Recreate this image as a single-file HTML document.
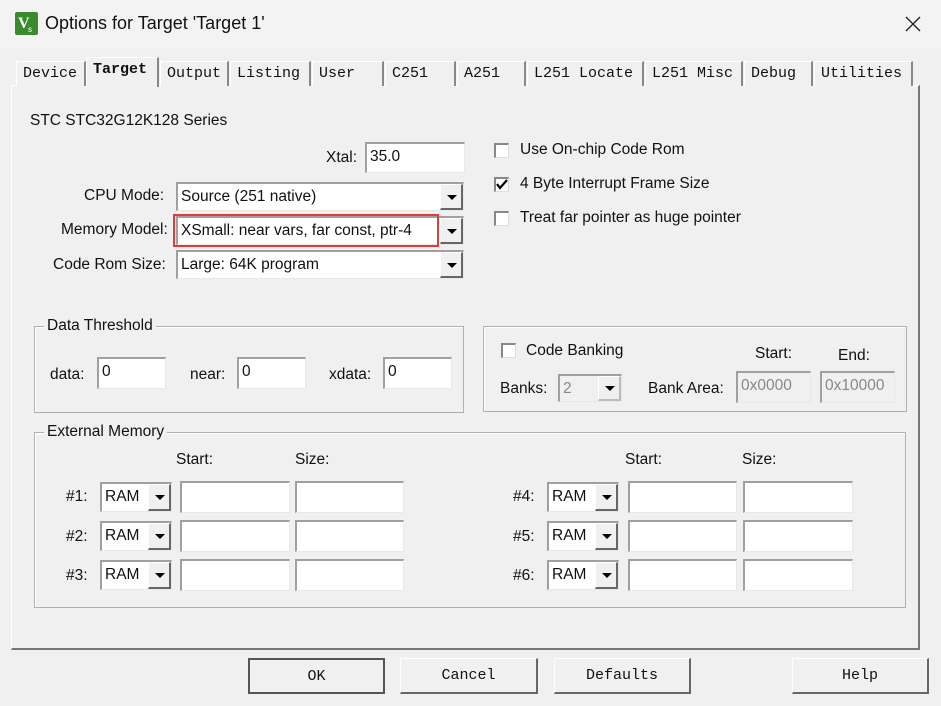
<!DOCTYPE html>
<html><head><meta charset="utf-8"><style>
*{box-sizing:border-box;margin:0;padding:0}
body{width:941px;height:706px;background:#f0f0f0;position:relative;overflow:hidden;font-family:"Liberation Sans",sans-serif;font-size:15.5px;color:#111}
.a{position:absolute;white-space:nowrap}
.tb{position:absolute;left:0;top:0;width:941px;height:48px;background:#f3f3f3}
.tab{position:absolute;top:61px;height:25px;border-top:1px solid #fff;border-left:1px solid #fff;border-right:2px solid #888;font-family:"Liberation Mono",monospace;font-size:15px;padding:3px 0 0 6px;background:#f0f0f0}
.in{position:absolute;background:#fff;border-top:2px solid #a0a0a0;border-left:2px solid #a0a0a0;border-right:1px solid #e8e8e8;border-bottom:1px solid #e8e8e8;padding:0 0 0 3px;font-size:15.5px;line-height:26px}
.dis{background:#f0f0f0;color:#888}
.dd{position:absolute;top:0;right:0;width:23px;height:100%;background:#f0f0f0;border-left:1px solid #fff;border-top:1px solid #fff;border-right:2px solid #666;border-bottom:2px solid #666}
.dd:after{content:"";position:absolute;left:6px;top:50%;margin-top:-2px;border-left:5px solid transparent;border-right:5px solid transparent;border-top:5px solid #000}
.grp{position:absolute;border:1px solid #b0b0b0;box-shadow:inset 1px 1px 0 #fff}
.lg{position:absolute;background:#f0f0f0;padding:0 3px;top:-10px;left:9px;font-size:15.5px}
.cb{position:absolute;width:15px;height:15px;background:#fff;border-top:2px solid #888;border-left:2px solid #888;border-right:1px solid #ddd;border-bottom:1px solid #ddd}
.btn{position:absolute;top:658px;height:36px;background:#f0f0f0;border-top:1px solid #fff;border-left:1px solid #fff;border-right:2px solid #666;border-bottom:2px solid #666;font-family:"Liberation Mono",monospace;font-size:15px;text-align:center;line-height:33px}
</style></head><body>
<div class="tb"></div>
<svg class="a" style="left:15px;top:12px" width="23" height="23" viewBox="0 0 23 23"><rect width="23" height="23" rx="2" fill="#3c8a2e"/><text x="3" y="16" font-family="Liberation Serif" font-weight="bold" font-size="16" fill="#fff">V</text><text x="13" y="20" font-family="Liberation Sans" font-size="8" fill="#fff">s</text></svg>
<div class="a" style="left:45px;top:13px;font-size:18px">Options for Target 'Target 1'</div>
<svg class="a" style="left:905px;top:16px" width="16" height="16"><path d="M1 1L15 15M15 1L1 15" stroke="#222" stroke-width="1.4"/></svg>
<div class="a" style="left:11px;top:85px;width:909px;height:565px;border-top:1px solid #fff;border-left:1px solid #fff;border-right:2px solid #777;border-bottom:2px solid #777"></div>
<div class="tab" style="left:16px;width:70px">Device</div>
<div class="tab" style="left:86px;top:57px;height:30px;width:73px;font-weight:bold;border-bottom:none">Target</div>
<div class="tab" style="left:160px;width:69px">Output</div>
<div class="tab" style="left:230px;width:81px">Listing</div>
<div class="tab" style="left:312px;width:72px">User</div>
<div class="tab" style="left:385px;width:71px">C251</div>
<div class="tab" style="left:457px;width:69px">A251</div>
<div class="tab" style="left:527px;width:117px">L251 Locate</div>
<div class="tab" style="left:645px;width:98px">L251 Misc</div>
<div class="tab" style="left:744px;width:69px">Debug</div>
<div class="tab" style="left:814px;width:99px">Utilities</div>

<div class="a" style="left:30px;top:112px">STC STC32G12K128 Series</div>
<div class="a" style="left:326px;top:149px">Xtal:</div>
<div class="in" style="left:365px;top:142px;width:100px;height:31px">35.0</div>
<div class="a" style="left:84px;top:187px">CPU Mode:</div>
<div class="in" style="left:176px;top:182px;width:288px;height:29px">Source (251 native)<div class="dd"></div></div>
<div class="a" style="left:61px;top:221px">Memory Model:</div>
<div class="in" style="left:176px;top:216px;width:288px;height:29px">XSmall: near vars, far const, ptr-4<div class="dd"></div></div>
<div class="a" style="left:173px;top:214px;width:266px;height:33px;border:2px solid #e03c3c"></div>
<div class="a" style="left:53px;top:256px">Code Rom Size:</div>
<div class="in" style="left:176px;top:250px;width:288px;height:29px">Large: 64K program<div class="dd"></div></div>

<div class="cb" style="left:494px;top:143px"></div><div class="a" style="left:520px;top:141px">Use On-chip Code Rom</div>
<div class="cb" style="left:494px;top:177px"></div>
<svg class="a" style="left:496px;top:179px" width="12" height="11"><path d="M1 5L4 9L11 1" stroke="#000" stroke-width="2.2" fill="none"/></svg>
<div class="a" style="left:520px;top:175px">4 Byte Interrupt Frame Size</div>
<div class="cb" style="left:494px;top:211px"></div><div class="a" style="left:520px;top:209px">Treat far pointer as huge pointer</div>

<div class="grp" style="left:34px;top:326px;width:430px;height:87px"><div class="lg">Data Threshold</div></div>
<div class="a" style="left:50px;top:366px">data:</div><div class="in" style="left:97px;top:357px;width:69px;height:32px">0</div>
<div class="a" style="left:190px;top:366px">near:</div><div class="in" style="left:237px;top:357px;width:69px;height:32px">0</div>
<div class="a" style="left:329px;top:366px">xdata:</div><div class="in" style="left:383px;top:357px;width:69px;height:32px">0</div>

<div class="grp" style="left:483px;top:326px;width:424px;height:86px"></div>
<div class="cb" style="left:501px;top:343px"></div><div class="a" style="left:526px;top:342px">Code Banking</div>
<div class="a" style="left:755px;top:345px">Start:</div><div class="a" style="left:838px;top:347px">End:</div>
<div class="a" style="left:500px;top:380px">Banks:</div>
<div class="in dis" style="left:558px;top:374px;width:64px;height:28px">2<div class="dd" style="border-right-color:#bbb;border-bottom-color:#bbb"></div></div>
<div class="a" style="left:648px;top:380px">Bank Area:</div>
<div class="in dis" style="left:736px;top:371px;width:75px;height:32px;font-size:15.5px">0x0000</div>
<div class="in dis" style="left:820px;top:371px;width:75px;height:32px;font-size:15.5px">0x10000</div>

<div class="grp" style="left:34px;top:432px;width:872px;height:176px"><div class="lg">External Memory</div></div>
<div class="a" style="left:176px;top:451px">Start:</div><div class="a" style="left:295px;top:451px">Size:</div>
<div class="a" style="left:625px;top:451px">Start:</div><div class="a" style="left:742px;top:451px">Size:</div>

<div class="a" style="left:66px;top:488px">#1:</div><div class="in" style="left:100px;top:482px;width:72px;height:30px">RAM<div class="dd"></div></div>
<div class="in" style="left:180px;top:481px;width:110px;height:32px"></div><div class="in" style="left:295px;top:481px;width:109px;height:32px"></div>
<div class="a" style="left:66px;top:528px">#2:</div><div class="in" style="left:100px;top:521px;width:72px;height:30px">RAM<div class="dd"></div></div>
<div class="in" style="left:180px;top:520px;width:110px;height:32px"></div><div class="in" style="left:295px;top:520px;width:109px;height:32px"></div>
<div class="a" style="left:66px;top:567px">#3:</div><div class="in" style="left:100px;top:560px;width:72px;height:30px">RAM<div class="dd"></div></div>
<div class="in" style="left:180px;top:559px;width:110px;height:32px"></div><div class="in" style="left:295px;top:559px;width:109px;height:32px"></div>

<div class="a" style="left:513px;top:488px">#4:</div><div class="in" style="left:547px;top:482px;width:72px;height:30px">RAM<div class="dd"></div></div>
<div class="in" style="left:628px;top:481px;width:109px;height:32px"></div><div class="in" style="left:743px;top:481px;width:110px;height:32px"></div>
<div class="a" style="left:513px;top:528px">#5:</div><div class="in" style="left:547px;top:521px;width:72px;height:30px">RAM<div class="dd"></div></div>
<div class="in" style="left:628px;top:520px;width:109px;height:32px"></div><div class="in" style="left:743px;top:520px;width:110px;height:32px"></div>
<div class="a" style="left:513px;top:567px">#6:</div><div class="in" style="left:547px;top:560px;width:72px;height:30px">RAM<div class="dd"></div></div>
<div class="in" style="left:628px;top:559px;width:109px;height:32px"></div><div class="in" style="left:743px;top:559px;width:110px;height:32px"></div>

<div class="btn" style="left:248px;width:137px;border:2px solid #555">OK</div>
<div class="btn" style="left:400px;width:138px">Cancel</div>
<div class="btn" style="left:554px;width:137px">Defaults</div>
<div class="btn" style="left:792px;width:137px">Help</div>
</body></html>
